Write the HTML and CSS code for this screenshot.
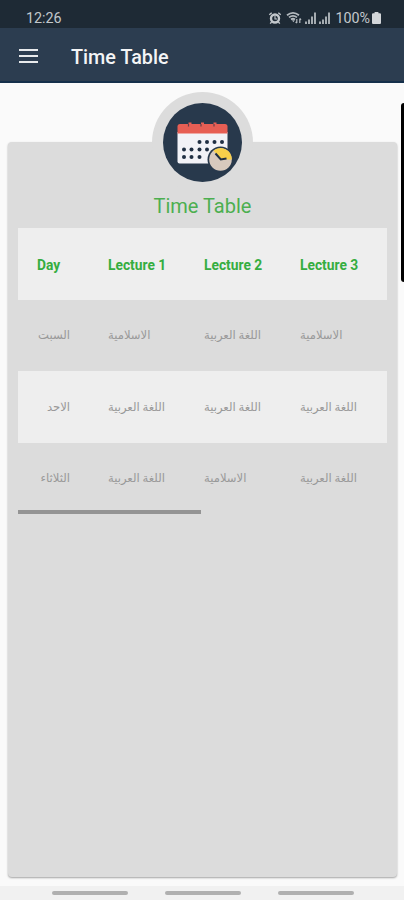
FILE: index.html
```
<!DOCTYPE html>
<html lang="en">
<head>
    <meta charset="UTF-8">
    <meta name="viewport" content="width=device-width, initial-scale=1.0">
    <title>Time Table</title>
    <link rel="stylesheet" href="styles.css">
</head>
<body>

    <div class="status-bar">
        <span class="clock">12:26</span>
        <div class="status-icons">
            <svg width="14" height="14" viewBox="0 0 14 14" fill="none" stroke="#c3c8cc">
                <circle cx="7" cy="7.5" r="4" stroke-width="2.4"/>
                <path d="M7 5v3h2" stroke-width="1.1"/>
                <path d="M1.3 3.8l2.4-2M12.7 3.8l-2.4-2M3.6 11l-1.4 1.6M10.4 11l1.4 1.6" stroke-width="1.4"/>
            </svg>
            <svg class="wifi" width="16" height="14" viewBox="0 0 16 14" fill="none" stroke="#b4babf" stroke-width="1.8">
                <path d="M1 4.2q6-4.6 12 0M3 6.4q4-3 8 0M5 8.5q2-1.5 4 0"/>
                <path d="M6 9.3l1.4 2 1.4-2z" fill="#b4babf" stroke="none"/>
                <path d="M10.8 8v4M9.6 10.8l1.2 1.4M13.8 12V7.5M13.8 7.5l1.2 1.4" stroke-width="1.2"/>
            </svg>
            <svg class="signal" width="11" height="12" viewBox="0 0 11 12" fill="#a5acb1">
                <path d="M0 9.5h2V12H0zM3 7.5h2V12H3zM6 4.5h2V12H6zM9 .5h2V12H9z"/>
            </svg>
            <svg class="signal" width="11" height="12" viewBox="0 0 11 12" fill="#a5acb1">
                <path d="M0 9.5h2V12H0zM3 7.5h2V12H3zM6 4.5h2V12H6zM9 .5h2V12H9z"/>
            </svg>
            <span class="percent">100%</span>
            <svg width="9" height="12" viewBox="0 0 8 12" preserveAspectRatio="none" fill="#d3d6d9">
                <path d="M2.3 0h3.4v1.2H7q1 0 1 1V11q0 1-1 1H1q-1 0-1-1V2.200q0-1 1-1h1.300z"/>
            </svg>
        </div>
    </div>

    <div class="app-bar">
        <div class="menu">
            <span></span>
            <span></span>
            <span></span>
        </div>
        <h1>Time Table</h1>
    </div>

    <div class="content">
        <div class="card">
            <div class="badge">
                <svg width="79" height="79" viewBox="0 0 79 79">
                    <circle cx="39.500" cy="39.500" r="39.500" fill="#28394c"/>
                    <path d="M14.500 29h50v29.500q0 2-2 2h-46q-2 0-2-2z" fill="#f2f2f7"/>
                    <path d="M14.500 30.500v-7q0-2.500 2.500-2.500h45q2.500 0 2.500 2.500v7z" fill="#e75e54"/>
                    <path d="M27 19.500v4M39.500 19.500v4M52 19.500v4" stroke="#e75e54" stroke-width="3"/>
                    <path d="M25.500 21v2.500M38 21v2.500M51 21v2.500" stroke="#68404a" stroke-width="1.200"/>
                    <g fill="#202f43">
                        <circle cx="36.500" cy="39" r="2"/>
                        <circle cx="44" cy="39" r="2"/>
                        <circle cx="51.500" cy="39" r="2"/>
                        <circle cx="59" cy="39" r="2"/>
                        <circle cx="21" cy="46.500" r="2"/>
                        <circle cx="28.500" cy="46.500" r="2"/>
                        <circle cx="36.500" cy="46.500" r="2"/>
                        <circle cx="44" cy="46.500" r="2"/>
                        <circle cx="21" cy="54" r="2"/>
                        <circle cx="28.500" cy="54" r="2"/>
                        <circle cx="36.500" cy="54" r="2"/>
                    </g>
                    <circle cx="57.500" cy="56.500" r="13" fill="#28394c"/>
                    <circle cx="57.500" cy="56.500" r="11.300" fill="#d8c9bd"/>
                    <path d="M57.500 56.500l-7-8.900a11.300 11.300 0 0 1 18.300 8.900z" fill="#f8d04a"/>
                    <path d="M52.500 50.500l5.300 6 5.700-1" fill="none" stroke="#202f43" stroke-width="2"/>
                </svg>
            </div>
            <h2>Time Table</h2>

            <table class="timetable">
                <thead>
                    <tr>
                        <th class="day-col">Day</th>
                        <th class="lecture-col">Lecture 1</th>
                        <th class="lecture-col">Lecture 2</th>
                        <th>Lecture 3</th>
                    </tr>
                </thead>
                <tbody lang="ar">
                    <tr>
                        <td class="day">السبت</td>
                        <td>الاسلامية</td>
                        <td>اللغة العربية</td>
                        <td>الاسلامية</td>
                    </tr>
                    <tr>
                        <td class="day">الاحد</td>
                        <td>اللغة العربية</td>
                        <td>اللغة العربية</td>
                        <td>اللغة العربية</td>
                    </tr>
                    <tr>
                        <td class="day">الثلاثاء</td>
                        <td>اللغة العربية</td>
                        <td>الاسلامية</td>
                        <td>اللغة العربية</td>
                    </tr>
                </tbody>
            </table>
            <div class="scrollbar"></div>
        </div>
    </div>

    <div class="nav-bar">
        <span></span>
        <span></span>
        <span></span>
    </div>

    <!-- edge panel handle -->
    <div class="edge-handle"></div>

</body>
</html>
```
FILE: styles.css
```
* {
    box-sizing: border-box;
}
body {
    margin: 0;
    height: 900px;
    position: relative;
    display: flex;
    flex-direction: column;
    overflow: hidden;
    font-family: Roboto, "DejaVu Sans", sans-serif;
    background-color: #fafafa;
}
h1, h2 {
    margin: 0;
}
.status-bar {
    height: 28px;
    padding: 7px 23px 0 26px;
    display: flex;
    justify-content: space-between;
    align-items: center;
    background-color: #1e2a35;
    color: #c3c8cc;
    font-size: 14.3px;
}
.status-icons {
    display: flex;
    align-items: center;
}
.wifi {
    margin-left: 4px;
}
.signal {
    margin-left: 3px;
}
.percent {
    margin-left: 5px;
    margin-right: 2px;
}
.app-bar {
    height: 55px;
    padding: 3px 19px 0;
    display: flex;
    align-items: center;
    gap: 34px;
    background-color: #2c3d50;
    border-bottom: 2px solid #15304b;
}
.menu {
    width: 19px;
    display: flex;
    flex-direction: column;
    gap: 4px;
}
.menu span {
    height: 2px;
    background-color: #e8eaec;
}
h1 {
    margin-left: -1px;
    padding-top: 2px;
    color: #f4f5f6;
    font-size: 19.8px;
    font-weight: 500;
}
.content {
    flex: 1;
    display: flex;
    padding: 59px 7px 9px 8px;
}
.card {
    flex: 1;
    padding: 0 10px;
    background-color: #dcdcdc;
    border-radius: 4px;
    box-shadow: 0 1px 2px rgba(0, 0, 0, 0.35);
}
.badge {
    width: 101px;
    height: 101px;
    margin: -50px auto 0;
    display: flex;
    align-items: center;
    justify-content: center;
    border-radius: 50%;
    background-color: #dcdcdc;
}
h2 {
    height: 35px;
    line-height: 26px;
    text-align: center;
    color: #4caf50;
    font-size: 20px;
    font-weight: 400;
}
.timetable {
    width: 100%;
    table-layout: fixed;
    border-collapse: collapse;
}
.timetable tr {
    height: 71.5px;
}
.timetable thead tr,
.timetable tbody tr:nth-child(even) {
    background-color: #eeeeee;
}
.timetable th {
    padding: 2px 0 0;
    text-align: left;
    color: #35ad40;
    font-size: 13.8px;
    font-weight: 700;
}
.timetable .day-col {
    width: 90px;
    padding-left: 19px;
}
.timetable .lecture-col {
    width: 96px;
}
.timetable td {
    padding: 0;
    color: #999999;
    font-size: 11.6px;
    white-space: nowrap;
}
.timetable .day {
    padding-right: 38px;
    text-align: right;
}
.scrollbar {
    width: 183px;
    height: 4px;
    margin-top: -4px;
    background-color: #949494;
}
.nav-bar {
    height: 14px;
    padding: 0 50px 0 52px;
    display: flex;
    justify-content: space-between;
    align-items: center;
    background-color: #f1f1f1;
}
.nav-bar span {
    width: 76px;
    height: 4px;
    border-radius: 2px;
    background-color: #b0b0b0;
}
.edge-handle {
    position: absolute;
    top: 103px;
    right: 0;
    width: 3px;
    height: 179px;
    border-radius: 3px 0 0 3px;
    background-color: #000000;
}
```
